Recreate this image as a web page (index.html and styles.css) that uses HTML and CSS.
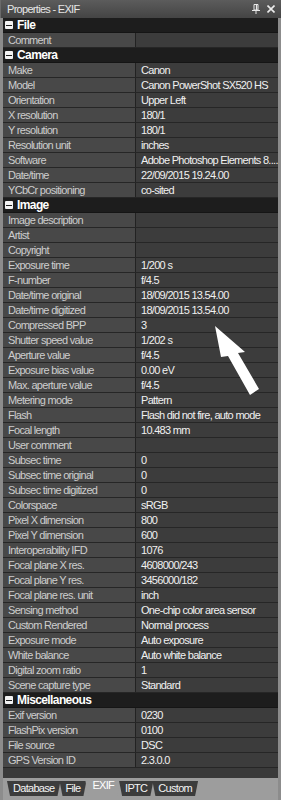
FILE: index.html
```html
<!DOCTYPE html>
<html>
<head>
<meta charset="utf-8">
<link rel="stylesheet" href="styles.css">
</head>
<body>
<div class="window">
  <div class="titlebar">
    <span class="title">Properties - EXIF</span>
    <span class="tb-icons">
      <svg class="pin" width="8" height="10" viewBox="0 0 8 10"><path d="M2 0.5h4v5.5h-4z" fill="none" stroke="#e8e8e8" stroke-width="1"/><path d="M4.5 1v5" stroke="#e8e8e8" stroke-width="1.2"/><path d="M0 6.5h8" stroke="#e8e8e8" stroke-width="1"/><path d="M4 6.5v3.5" stroke="#e8e8e8" stroke-width="1"/></svg>
      <svg class="close" width="8" height="8" viewBox="0 0 8 8"><path d="M0.5 0.5l7 7M7.5 0.5l-7 7" stroke="#ececec" stroke-width="1.6"/></svg>
    </span>
  </div>
  <div class="body">
    <div class="grid">
      <div class="sec"><span class="box"></span>File</div>
      <div class="row"><span class="n">Comment</span><span class="v"></span></div>

      <div class="sec"><span class="box"></span>Camera</div>
      <div class="row"><span class="n">Make</span><span class="v">Canon</span></div>
      <div class="row"><span class="n">Model</span><span class="v">Canon PowerShot SX520 HS</span></div>
      <div class="row"><span class="n">Orientation</span><span class="v">Upper Left</span></div>
      <div class="row"><span class="n">X resolution</span><span class="v">180/1</span></div>
      <div class="row"><span class="n">Y resolution</span><span class="v">180/1</span></div>
      <div class="row"><span class="n">Resolution unit</span><span class="v">inches</span></div>
      <div class="row"><span class="n">Software</span><span class="v">Adobe Photoshop Elements 8....</span></div>
      <div class="row"><span class="n">Date/time</span><span class="v">22/09/2015 19.24.00</span></div>
      <div class="row"><span class="n">YCbCr positioning</span><span class="v">co-sited</span></div>

      <div class="sec"><span class="box"></span>Image</div>
      <div class="row"><span class="n">Image description</span><span class="v"></span></div>
      <div class="row"><span class="n">Artist</span><span class="v"></span></div>
      <div class="row"><span class="n">Copyright</span><span class="v"></span></div>
      <div class="row"><span class="n">Exposure time</span><span class="v">1/200 s</span></div>
      <div class="row"><span class="n">F-number</span><span class="v">f/4.5</span></div>
      <div class="row"><span class="n">Date/time original</span><span class="v">18/09/2015 13.54.00</span></div>
      <div class="row"><span class="n">Date/time digitized</span><span class="v">18/09/2015 13.54.00</span></div>
      <div class="row"><span class="n">Compressed BPP</span><span class="v">3</span></div>
      <div class="row"><span class="n">Shutter speed value</span><span class="v">1/202 s</span></div>
      <div class="row"><span class="n">Aperture value</span><span class="v">f/4.5</span></div>
      <div class="row"><span class="n">Exposure bias value</span><span class="v">0.00 eV</span></div>
      <div class="row"><span class="n">Max. aperture value</span><span class="v">f/4.5</span></div>
      <div class="row"><span class="n">Metering mode</span><span class="v">Pattern</span></div>
      <div class="row"><span class="n">Flash</span><span class="v">Flash did not fire, auto mode</span></div>
      <div class="row"><span class="n">Focal length</span><span class="v">10.483 mm</span></div>
      <div class="row"><span class="n">User comment</span><span class="v"></span></div>
      <div class="row"><span class="n">Subsec time</span><span class="v">0</span></div>
      <div class="row"><span class="n">Subsec time original</span><span class="v">0</span></div>
      <div class="row"><span class="n">Subsec time digitized</span><span class="v">0</span></div>
      <div class="row"><span class="n">Colorspace</span><span class="v">sRGB</span></div>
      <div class="row"><span class="n">Pixel X dimension</span><span class="v">800</span></div>
      <div class="row"><span class="n">Pixel Y dimension</span><span class="v">600</span></div>
      <div class="row"><span class="n">Interoperability IFD</span><span class="v">1076</span></div>
      <div class="row"><span class="n">Focal plane X res.</span><span class="v">4608000/243</span></div>
      <div class="row"><span class="n">Focal plane Y res.</span><span class="v">3456000/182</span></div>
      <div class="row"><span class="n">Focal plane res. unit</span><span class="v">inch</span></div>
      <div class="row"><span class="n">Sensing method</span><span class="v">One-chip color area sensor</span></div>
      <div class="row"><span class="n">Custom Rendered</span><span class="v">Normal process</span></div>
      <div class="row"><span class="n">Exposure mode</span><span class="v">Auto exposure</span></div>
      <div class="row"><span class="n">White balance</span><span class="v">Auto white balance</span></div>
      <div class="row"><span class="n">Digital zoom ratio</span><span class="v">1</span></div>
      <div class="row"><span class="n">Scene capture type</span><span class="v">Standard</span></div>

      <div class="sec"><span class="box"></span>Miscellaneous</div>
      <div class="row"><span class="n">Exif version</span><span class="v">0230</span></div>
      <div class="row"><span class="n">FlashPix version</span><span class="v">0100</span></div>
      <div class="row"><span class="n">File source</span><span class="v">DSC</span></div>
      <div class="row"><span class="n">GPS Version ID</span><span class="v">2.3.0.0</span></div>
    </div>
    <div class="filler"></div>
    <div class="tabs">
      <span class="tab">Database</span>
      <span class="tab">File</span>
      <span class="tab active">EXIF</span>
      <span class="tab">IPTC</span>
      <span class="tab">Custom</span>
    </div>
    <svg class="arrow" width="281" height="800" viewBox="0 0 281 800"><polygon points="215,326 245,352 238,353 259,389 250,395 228,356 221,357" fill="#ffffff"/></svg>
  </div>
</div>
</body>
</html>
```

FILE: styles.css
```css
* { box-sizing: border-box; }
html, body { margin: 0; padding: 0; background: #3a3a3a; }
body {
  width: 281px;
  height: 800px;
  overflow: hidden;
  font-family: "Liberation Sans", Arial, sans-serif;
  font-size: 11px;
  letter-spacing: -0.7px;
}
.window { width: 281px; height: 800px; display: flex; flex-direction: column; }
.titlebar {
  height: 18px;
  background: linear-gradient(#5c5c5c, #444444);
  border-left: 1px solid #6a6a6a;
  display: flex;
  align-items: center;
  justify-content: space-between;
  padding: 0 6px 0 6px;
  color: #e6e6e6;
}
.title { line-height: 18px; }
.tb-icons { display: flex; align-items: center; gap: 7px; }
.body {
  flex: 1;
  display: flex;
  flex-direction: column;
  border-left: 3px solid #8c8c8c;
  border-right: 3px solid #8c8c8c;
  background: #3a3a3a;
}
.grid { display: flex; flex-direction: column; }
.sec {
  height: 15px;
  background: #1d1d1d;
  border-bottom: 1px solid #151515;
  color: #ffffff;
  font-weight: bold;
  font-size: 12px;
  letter-spacing: -0.6px;
  line-height: 15px;
  display: flex;
  align-items: center;
  padding-left: 2px;
}
.box {
  width: 8px;
  height: 8px;
  background: #f2f2f2;
  border-radius: 1px;
  margin-right: 4px;
  position: relative;
  flex: none;
}
.box::after {
  content: "";
  position: absolute;
  left: 1px;
  right: 1px;
  top: 3.5px;
  height: 1px;
  background: #1d1d1d;
}
.row {
  height: 15px;
  display: flex;
  border-bottom: 1px solid #262626;
}
.n {
  width: 133px;
  flex: none;
  background: #484848;
  color: #cdcdcd;
  border-right: 1px solid #222222;
  padding-left: 5px;
  line-height: 15px;
  white-space: nowrap;
  overflow: hidden;
}
.v {
  flex: 1;
  background: #3c3c3c;
  color: #f0f0f0;
  padding-left: 5px;
  line-height: 15px;
  white-space: nowrap;
  overflow: hidden;
}
.filler { height: 10px; background: #3a3a3a; }
.tabs {
  flex: 1;
  background: #9d9d9d;
  display: flex;
  align-items: flex-start;
  padding: 3px 0 0 4px;
}
.tab {
  height: 15px;
  line-height: 14px;
  background: #3c3c3c;
  color: #f4f4f4;
  padding: 0 6px;
  clip-path: polygon(0 0, 100% 0, calc(100% - 3px) 100%, 3px 100%);
  margin-right: -1px;
}
.tab.active {
  background: #9d9d9d;
  color: #ffffff;
  line-height: 9px;
  padding: 0 6px 0 7px;
}
.arrow { position: absolute; left: 0; top: 0; pointer-events: none; }
```
